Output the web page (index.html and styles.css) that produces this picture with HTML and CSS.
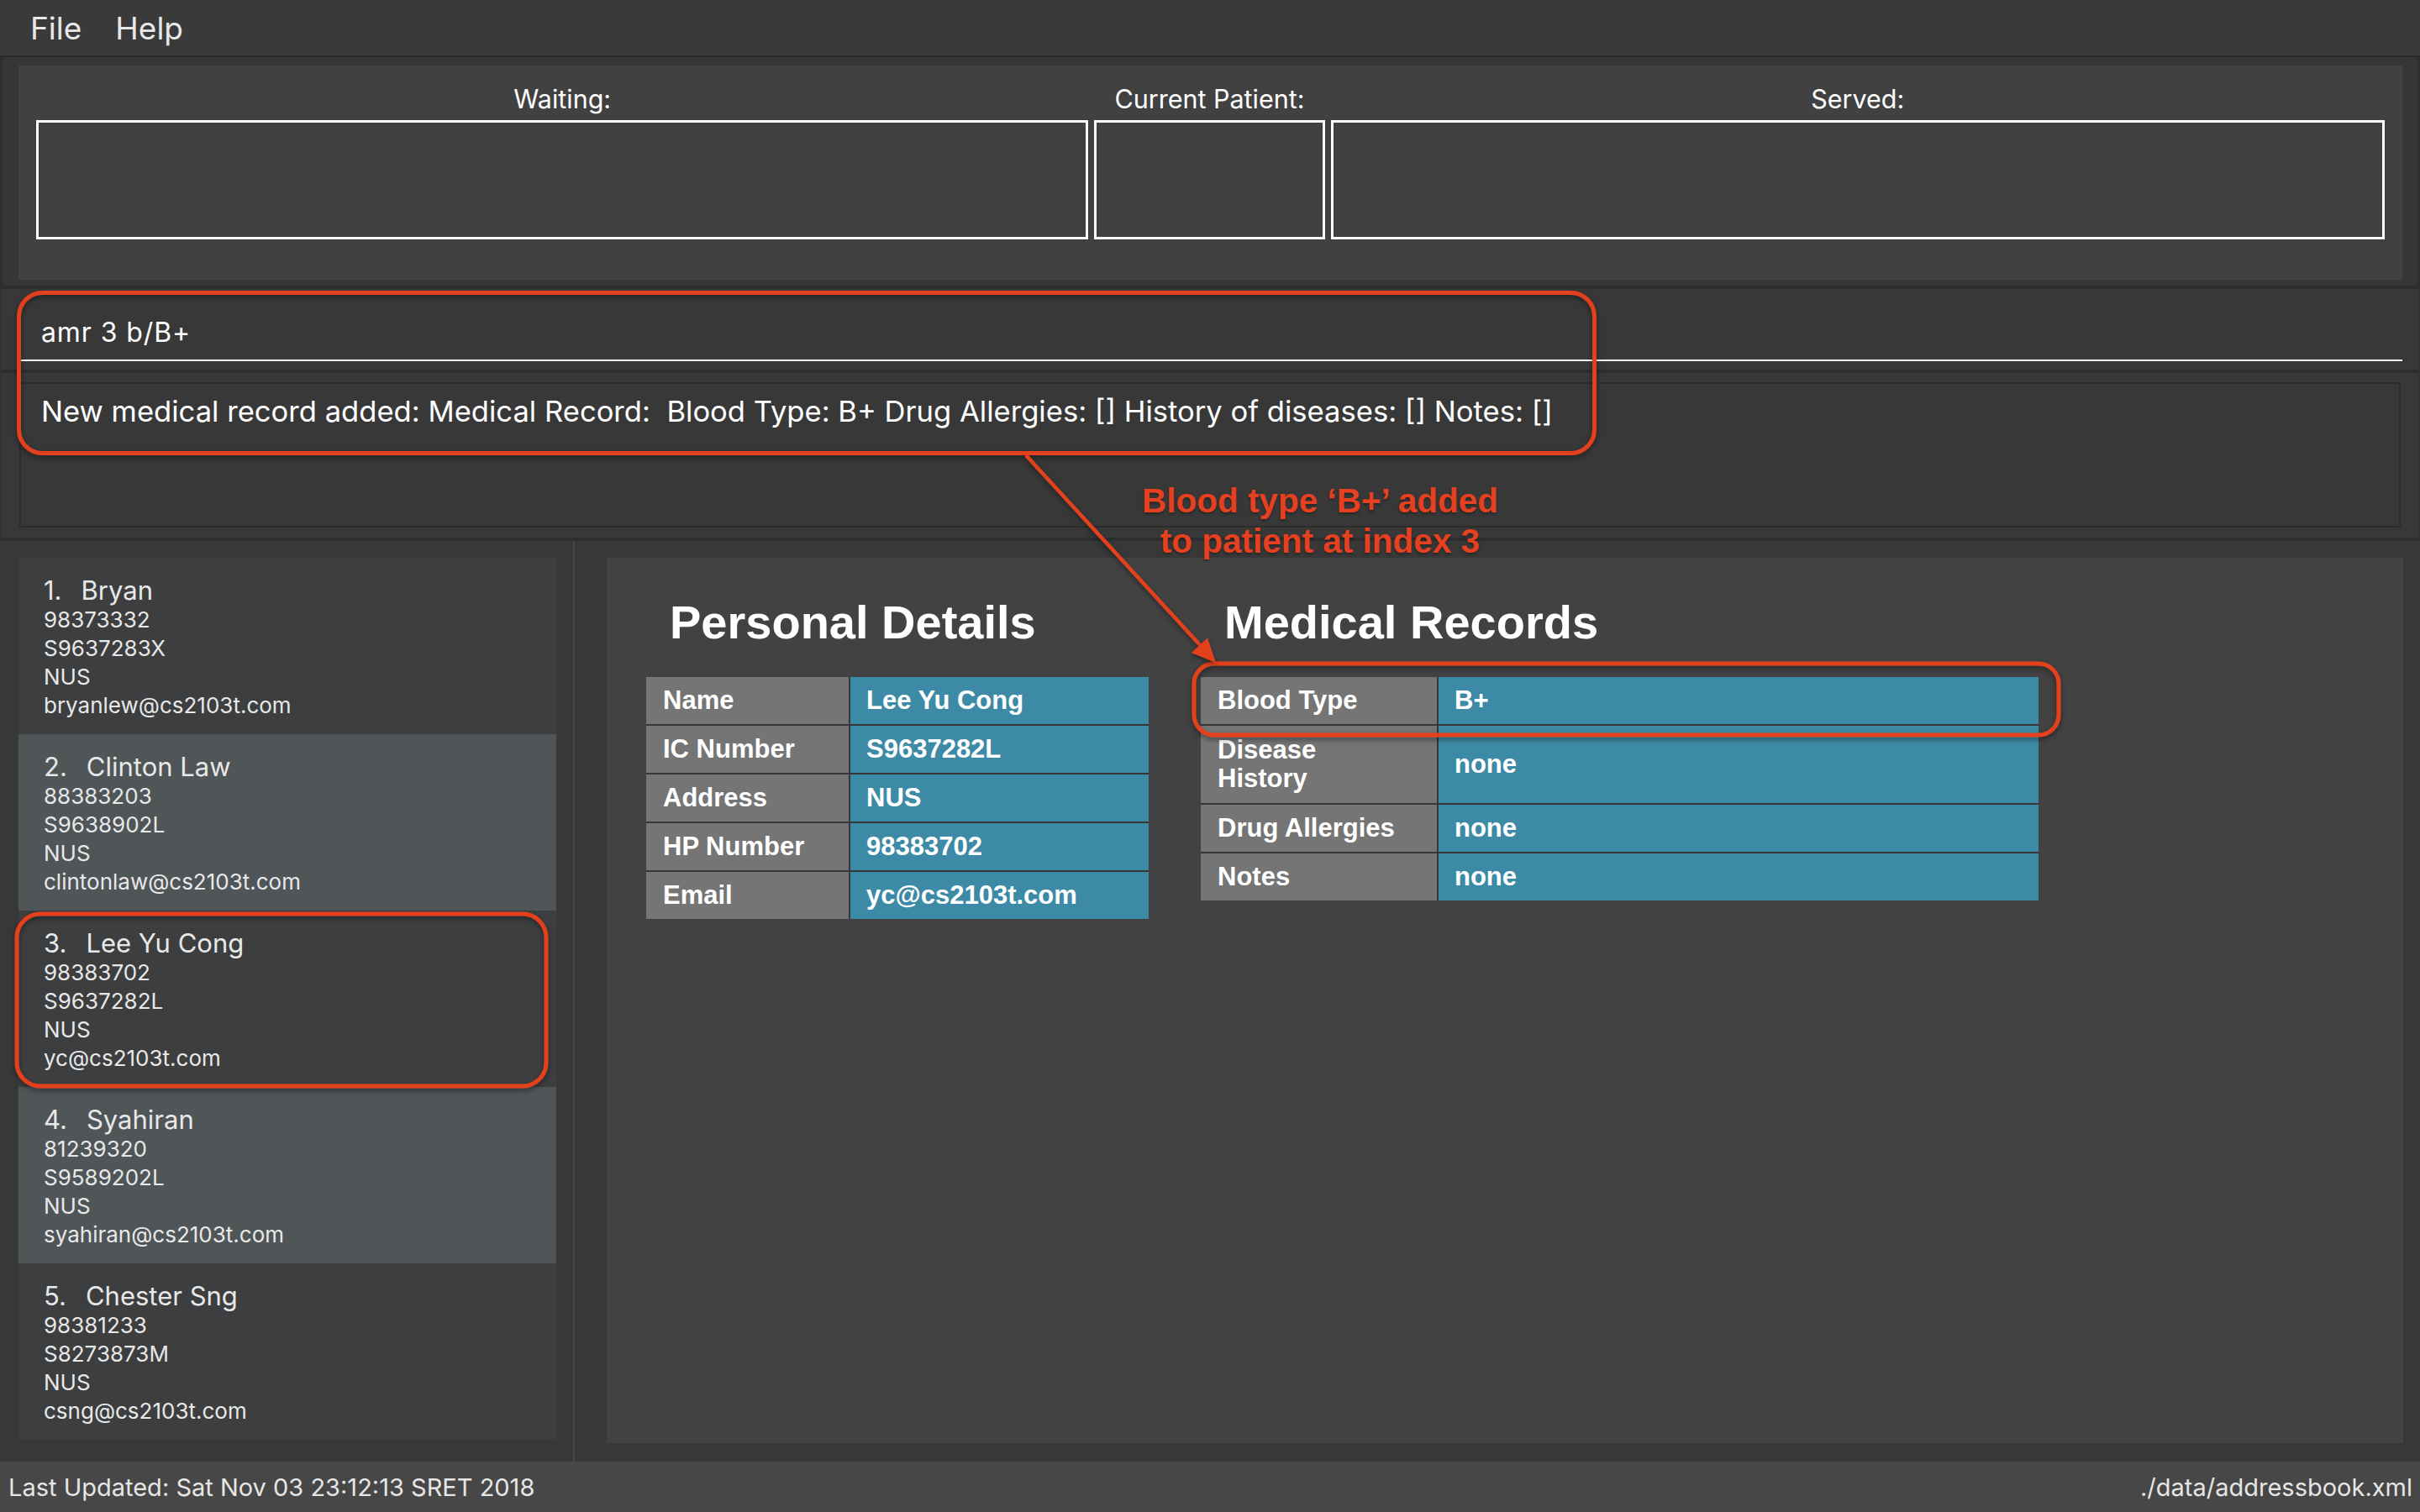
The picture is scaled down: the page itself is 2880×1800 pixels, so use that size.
FILE: index.html
```html
<!DOCTYPE html>
<html lang="en">
<head>
<meta charset="utf-8">
<title>Patient Book</title>
<link rel="stylesheet" href="styles.css">
</head>
<body>
<div class="app">
  <div class="menubar">
    <span class="menu-item">File</span>
    <span class="menu-item">Help</span>
  </div>

  <div class="queue-pane">
    <div class="queue-panel">
      <div class="queue-col">
        <div class="queue-label">Waiting:</div>
        <div class="queue-box"></div>
      </div>
      <div class="queue-col">
        <div class="queue-label">Current Patient:</div>
        <div class="queue-box"></div>
      </div>
      <div class="queue-col">
        <div class="queue-label">Served:</div>
        <div class="queue-box"></div>
      </div>
    </div>
  </div>

  <div class="command-pane">
    <div class="command-field">amr 3 b/B+</div>
  </div>

  <div class="result-pane">
    <div class="result-box">New medical record added: Medical Record:  Blood Type: B+ Drug Allergies: [] History of diseases: [] Notes: []</div>
  </div>

  <div class="main">
    <div class="list-pane">
      <div class="card">
        <div class="card-name"><span class="card-id">1.</span>Bryan</div>
        <div class="card-line">98373332</div>
        <div class="card-line">S9637283X</div>
        <div class="card-line">NUS</div>
        <div class="card-line">bryanlew@cs2103t.com</div>
      </div>
      <div class="card card-alt">
        <div class="card-name"><span class="card-id">2.</span>Clinton Law</div>
        <div class="card-line">88383203</div>
        <div class="card-line">S9638902L</div>
        <div class="card-line">NUS</div>
        <div class="card-line">clintonlaw@cs2103t.com</div>
      </div>
      <div class="card">
        <div class="card-name"><span class="card-id">3.</span>Lee Yu Cong</div>
        <div class="card-line">98383702</div>
        <div class="card-line">S9637282L</div>
        <div class="card-line">NUS</div>
        <div class="card-line">yc@cs2103t.com</div>
      </div>
      <div class="card card-alt">
        <div class="card-name"><span class="card-id">4.</span>Syahiran</div>
        <div class="card-line">81239320</div>
        <div class="card-line">S9589202L</div>
        <div class="card-line">NUS</div>
        <div class="card-line">syahiran@cs2103t.com</div>
      </div>
      <div class="card">
        <div class="card-name"><span class="card-id">5.</span>Chester Sng</div>
        <div class="card-line">98381233</div>
        <div class="card-line">S8273873M</div>
        <div class="card-line">NUS</div>
        <div class="card-line">csng@cs2103t.com</div>
      </div>
    </div>

    <div class="browser-pane">
      <div class="browser-panel">
        <div class="section section-personal">
          <h2 class="section-title">Personal Details</h2>
          <div class="details details-personal">
            <div class="cell cell-label">Name</div><div class="cell cell-value">Lee Yu Cong</div>
            <div class="cell cell-label">IC Number</div><div class="cell cell-value">S9637282L</div>
            <div class="cell cell-label">Address</div><div class="cell cell-value">NUS</div>
            <div class="cell cell-label">HP Number</div><div class="cell cell-value">98383702</div>
            <div class="cell cell-label">Email</div><div class="cell cell-value">yc@cs2103t.com</div>
          </div>
        </div>
        <div class="section section-medical">
          <h2 class="section-title">Medical Records</h2>
          <div class="details details-medical">
            <div class="cell cell-label">Blood Type</div><div class="cell cell-value">B+</div>
            <div class="cell cell-label cell-tall">Disease<br>History</div><div class="cell cell-value cell-tall">none</div>
            <div class="cell cell-label">Drug Allergies</div><div class="cell cell-value">none</div>
            <div class="cell cell-label">Notes</div><div class="cell cell-value">none</div>
          </div>
        </div>
      </div>
    </div>
  </div>

  <div class="statusbar">
    <span class="status-left">Last Updated: Sat Nov 03 23:12:13 SRET 2018</span>
    <span class="status-right">./data/addressbook.xml</span>
  </div>
</div>

<svg class="annotations" width="2880" height="1800" viewBox="0 0 2880 1800" xmlns="http://www.w3.org/2000/svg">
  <defs>
    <filter id="shadow" x="-5%" y="-20%" width="110%" height="140%">
      <feDropShadow dx="0" dy="3" stdDeviation="3" flood-color="#000" flood-opacity="0.45"/>
    </filter>
  </defs>
  <g filter="url(#shadow)" fill="none" stroke="#e5401f" stroke-width="5">
    <rect x="22.5" y="348.5" width="1875" height="191" rx="28" ry="28"/>
    <rect x="20" y="1088" width="630" height="205" rx="28" ry="28"/>
    <rect x="1421" y="790" width="1029" height="85" rx="24" ry="24"/>
    <line x1="1221" y1="542" x2="1431" y2="771" stroke-width="4.5"/>
  </g>
  <polygon points="1447,789 1418,777 1437,759.5" fill="#e5401f" filter="url(#shadow)"/>
</svg>
<div class="annotation-text">Blood type ‘B+’ added<br>to patient at index 3</div>
</body>
</html>
```

FILE: styles.css
```css
* {
  box-sizing: border-box;
  margin: 0;
  padding: 0;
}

html,
body {
  width: 2880px;
  height: 1800px;
  overflow: hidden;
}

body {
  position: relative;
  background: #383838;
  color: #ffffff;
  font-family: Inter, "Noto Sans", sans-serif;
}

.app {
  display: flex;
  flex-direction: column;
  width: 2880px;
  height: 1800px;
}

/* Menu bar */
.menubar {
  flex: none;
  height: 68px;
  display: flex;
  align-items: center;
  gap: 40px;
  padding-left: 36px;
  background: #3a3a3a;
  border-bottom: 2px solid #2b2b2b;
  font-size: 37px;
  color: #e8e8e8;
}

/* Queue */
.queue-pane {
  flex: none;
  height: 276px;
  padding: 10px 18px 7px 19px;
  background: #363636;
  border-left: 3px solid #2e2e2e;
  border-right: 3px solid #2e2e2e;
  border-bottom: 4px solid #2e2e2e;
}

.queue-panel {
  height: 255px;
  display: grid;
  grid-template-columns: 1252fr 274fr 1254fr;
  column-gap: 7px;
  padding: 22px 21px 0 21px;
  background: #414141;
}

.queue-label {
  font-size: 30.5px;
  line-height: 36px;
  text-align: center;
  color: #ffffff;
  margin-bottom: 7px;
}

.queue-box {
  height: 142px;
  border: 3px solid #ffffff;
}

/* Command box */
.command-pane {
  flex: none;
  height: 100px;
  padding: 0 18px 0 22px;
  background: #383838;
  border-left: 3px solid #333333;
  border-right: 3px solid #333333;
  border-bottom: 4px solid #2e2e2e;
}

.command-field {
  padding: 34px 0 14px 24px;
  border-bottom: 2px solid #ffffff;
  font-size: 32px;
  line-height: 36px;
  letter-spacing: 0.9px;
  color: #ffffff;
}

/* Result display */
.result-pane {
  flex: none;
  height: 200px;
  padding: 11px 20px 12px 20px;
  background: #383838;
  border-left: 3px solid #333333;
  border-right: 3px solid #333333;
  border-bottom: 4px solid #2e2e2e;
}

.result-box {
  height: 173px;
  padding: 11px 0 0 24px;
  border: 2px solid #2c2c2c;
  font-size: 34.6px;
  line-height: 42px;
  white-space: pre;
  color: #ffffff;
}

/* Main split */
.main {
  flex: 1;
  min-height: 0;
  display: flex;
}

.list-pane {
  flex: none;
  width: 684px;
  padding: 20px 20px 0 22px;
  border-right: 2px solid #464646;
  display: flex;
  flex-direction: column;
}

.card {
  height: 210px;
  flex: none;
  padding: 20px 0 0 30px;
  background: #3c3e40;
  color: #e8e8e8;
}

.card-alt {
  background: #505558;
}

.card-name {
  font-size: 31px;
  line-height: 37px;
}

.card-id {
  margin-right: 23px;
}

.card-line {
  font-size: 26px;
  line-height: 34px;
}

.browser-pane {
  flex: 1;
  padding: 20px 20px 22px 38px;
}

.browser-panel {
  height: 100%;
  display: flex;
  align-items: flex-start;
  gap: 62px;
  padding: 45px 0 0 47px;
  background: #424242;
}

.section-title {
  font-family: "Liberation Sans", Arial, sans-serif;
  font-weight: bold;
  font-size: 56px;
  line-height: 64px;
  padding-left: 28px;
  margin-bottom: 33px;
  color: #ffffff;
}

.details {
  display: grid;
  gap: 2px;
  background: #363636;
}

.details-personal {
  grid-template-columns: 241px 355px;
}

.details-medical {
  grid-template-columns: 281px 714px;
}

.cell {
  min-height: 56px;
  display: flex;
  align-items: center;
  font-family: "Liberation Sans", Arial, sans-serif;
  font-weight: bold;
  font-size: 31px;
  line-height: 34px;
  color: #ffffff;
}

.cell-label {
  padding-left: 20px;
  background: #757575;
}

.cell-value {
  padding-left: 19px;
  background: #3d8aa6;
}

.cell-tall {
  padding-top: 12px;
  padding-bottom: 12px;
}

/* Status bar */
.statusbar {
  flex: none;
  height: 60px;
  display: flex;
  justify-content: space-between;
  align-items: center;
  padding: 0 9px 0 10px;
  background: #474747;
  font-size: 29px;
  color: #e6e6e6;
}

/* Annotation overlay */
.annotations {
  position: absolute;
  top: 0;
  left: 0;
  pointer-events: none;
}

.annotation-text {
  position: absolute;
  top: 572px;
  left: 1271px;
  width: 600px;
  text-align: center;
  font-family: "Liberation Sans", Arial, sans-serif;
  font-weight: bold;
  font-size: 40.5px;
  line-height: 48px;
  color: #e5401f;
  text-shadow: 0 2px 3px rgba(0, 0, 0, 0.35);
  pointer-events: none;
}
```
